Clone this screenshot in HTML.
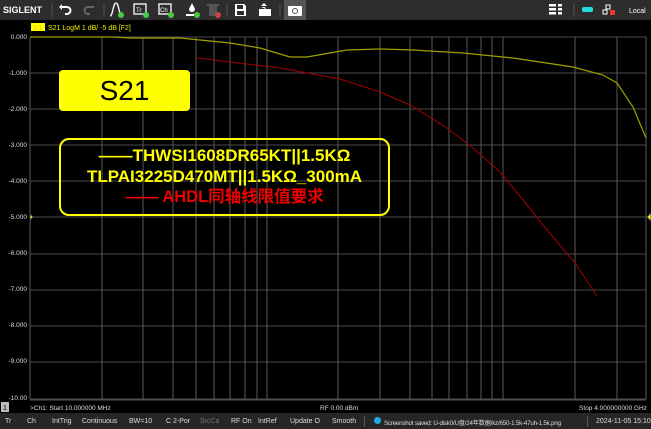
<!DOCTYPE html>
<html><head><meta charset="utf-8"><style>
body{margin:0;width:651px;height:429px;background:#000;overflow:hidden;font-family:"Liberation Sans","Noto Sans CJK SC",sans-serif;position:relative}
.tb{position:absolute;left:0;top:0;width:651px;height:20px;background:#2d2d2d}
.sb{position:absolute;left:0;top:413px;width:651px;height:16px;background:#262626;color:#ddd;font-size:7px}
.sb span{position:absolute;top:5px;white-space:nowrap}
.ab{position:absolute}
</style></head><body>
<div class="tb">
<svg width="651" height="20" style="position:absolute;left:0;top:0">
<text x="3" y="13" fill="#fff" font-size="9" font-weight="bold" font-family="Liberation Sans">SIGLENT</text>
<g stroke="#555" stroke-width="1"><line x1="52" y1="3" x2="52" y2="17"/><line x1="104" y1="3" x2="104" y2="17"/><line x1="227" y1="3" x2="227" y2="17"/><line x1="280" y1="3" x2="280" y2="17"/><line x1="574" y1="3" x2="574" y2="17"/></g>
<path d="M61 7 h6 a3 3 0 0 1 0 7 h-2" stroke="#fff" stroke-width="2" fill="none"/><path d="M59 7 l3-3 v6z" fill="#fff"/>
<path d="M94 7 h-6 a3 3 0 0 0 0 7 h2" stroke="#666" stroke-width="2" fill="none"/>
<path d="M110 16 C113 16 113 3 116 3 C119 3 119 16 122 16" stroke="#fff" fill="none" stroke-width="1.3"/><circle cx="121" cy="15" r="3" fill="#4c4"/>
<rect x="134" y="4" width="12" height="10" fill="none" stroke="#fff" stroke-width="1.3"/><text x="136" y="12" fill="#fff" font-size="6">Tr</text><circle cx="146" cy="15" r="3" fill="#4c4"/>
<rect x="159" y="4" width="12" height="10" fill="none" stroke="#fff" stroke-width="1.3"/><text x="160" y="12" fill="#fff" font-size="6">Ch</text><circle cx="171" cy="15" r="3" fill="#4c4"/>
<path d="M192 3 l3 6 a3 3 0 0 1 -6 0z" fill="#fff"/><rect x="186" y="14" width="8" height="2" fill="#fff"/><circle cx="197" cy="15" r="3" fill="#4c4"/>
<rect x="209" y="6" width="8" height="10" fill="#555"/><rect x="207" y="4" width="12" height="2" fill="#555"/><circle cx="218" cy="15" r="3" fill="#c44"/>
<path d="M235 4 h9 l2 2 v10 h-11z" fill="#fff"/><rect x="237" y="5" width="6" height="4" fill="#2d2d2d"/><rect x="237" y="11" width="7" height="4" fill="#2d2d2d"/>
<path d="M259 9 h12 v7 h-12z M261 7 h4 l1 2" fill="#fff"/><path d="M264 3 l3 3 h-6z" fill="#fff"/>
<rect x="284" y="0" width="22" height="20" fill="#555"/><rect x="288" y="6" width="14" height="10" rx="1" fill="#fff"/><circle cx="295" cy="11" r="3" fill="#555"/><circle cx="295" cy="11" r="2" fill="#fff"/>
<g fill="#fff"><rect x="549" y="4" width="7" height="2.5"/><rect x="558" y="4" width="4" height="2.5"/><rect x="549" y="8" width="7" height="2.5"/><rect x="558" y="8" width="4" height="2.5"/><rect x="549" y="12" width="7" height="2.5"/><rect x="558" y="12" width="4" height="2.5"/></g>
<rect x="582" y="7" width="11" height="5" rx="2" fill="#2dd"/>
<rect x="606" y="5" width="4" height="4" fill="none" stroke="#fff"/><rect x="603" y="10" width="4" height="4" fill="none" stroke="#fff"/><rect x="610" y="10" width="5" height="5" fill="#e33"/>
<text x="629" y="13" fill="#fff" font-size="7">Local</text>
</svg></div>

<svg class="ab" style="left:0;top:20px" width="651" height="393">
<rect x="31" y="3" width="14" height="8" fill="#ff0"/><text x="33" y="10" fill="#cc0" font-size="6">Tr1</text>
<text x="48" y="10" fill="#ee0" font-size="7">S21 LogM 1 dB/ -5 dB [F2]</text>
<g font-size="6.5" fill="#ddd" text-anchor="end">
<text x="27" y="19">0.000</text><text x="27" y="55">-1.000</text><text x="27" y="91">-2.000</text><text x="27" y="127">-3.000</text><text x="27" y="163">-4.000</text><text x="27" y="199">-5.000</text><text x="27" y="235">-6.000</text><text x="27" y="271">-7.000</text><text x="27" y="307">-8.000</text><text x="27" y="343">-9.000</text><text x="27" y="380">-10.00</text>
</g>
<g stroke="#4a4a4a" stroke-width="1" transform="translate(0,-20)">
<line x1="30" y1="37" x2="646" y2="37"/><line x1="30" y1="73" x2="646" y2="73"/><line x1="30" y1="109" x2="646" y2="109"/><line x1="30" y1="145" x2="646" y2="145"/><line x1="30" y1="181" x2="646" y2="181"/><line x1="30" y1="217" x2="646" y2="217"/><line x1="30" y1="254" x2="646" y2="254"/><line x1="30" y1="290" x2="646" y2="290"/><line x1="30" y1="326" x2="646" y2="326"/><line x1="30" y1="362" x2="646" y2="362"/><line x1="30" y1="399" x2="646" y2="399"/>
<g stroke="#5a5a5a">
<line x1="30" y1="37" x2="30" y2="399"/><line x1="102" y1="37" x2="102" y2="399"/><line x1="143" y1="37" x2="143" y2="399"/><line x1="173" y1="37" x2="173" y2="399"/><line x1="196" y1="37" x2="196" y2="399"/><line x1="214" y1="37" x2="214" y2="399"/><line x1="230" y1="37" x2="230" y2="399"/><line x1="245" y1="37" x2="245" y2="399"/><line x1="257" y1="37" x2="257" y2="399"/><line x1="267" y1="37" x2="267" y2="399"/><line x1="338" y1="37" x2="338" y2="399"/><line x1="380" y1="37" x2="380" y2="399"/><line x1="410" y1="37" x2="410" y2="399"/><line x1="432" y1="37" x2="432" y2="399"/><line x1="449" y1="37" x2="449" y2="399"/><line x1="467" y1="37" x2="467" y2="399"/><line x1="481" y1="37" x2="481" y2="399"/><line x1="492" y1="37" x2="492" y2="399"/><line x1="503" y1="37" x2="503" y2="399"/><line x1="575" y1="37" x2="575" y2="399"/><line x1="617" y1="37" x2="617" y2="399"/><line x1="646" y1="37" x2="646" y2="399"/>
</g>
<polyline fill="none" stroke="#a0a000" stroke-width="1.2" points="30,37 113,37 130,38 180,38 230,43 260,48 290,57 307,57 347,50 380,49 413,50 463,53 513,58 573,67 603,75 617,83 633,107 646,138"/>
<polyline fill="none" stroke="#a00000" stroke-width="1" points="197,58 280,68 340,79 380,92 410,105 447,128 473,148 500,172 523,200 543,225 575,263 597,296"/>
<path d="M30 214 l3 3 l-3 3z M651 213 l-4 4 l4 4z" fill="#ff0"/>
</g>
<line x1="30" y1="380" x2="646" y2="380" stroke="#555"/>
<rect x="1" y="382" width="8" height="10" fill="#bbb"/><text x="3" y="390" font-size="7" fill="#000">1</text>
<text x="30" y="390" font-size="6.5" fill="#ddd">&gt;Ch1: Start 10.000000 MHz</text>
<text x="320" y="390" font-size="6.5" fill="#ddd">RF 0.00 dBm</text>
<text x="647" y="390" font-size="6.5" fill="#ddd" text-anchor="end">Stop 4.000000000 GHz</text>
</svg>

<div class="ab" style="left:59px;top:70px;width:131px;height:41px;background:#ff0;border-radius:4px;color:#000;font-size:28px;text-align:center;line-height:41px">S21</div>
<div class="ab" style="left:59px;top:138px;width:331px;height:78px;box-sizing:border-box;border:2px solid #ff0;border-radius:10px;text-align:center;font-weight:bold;font-size:17px;line-height:20.5px;padding-top:6px;white-space:nowrap">
<div style="color:#ff0">——THWSI1608DR65KT||1.5KΩ</div>
<div style="color:#ff0">TLPAI3225D470MT||1.5KΩ_300mA</div>
<div style="color:#e00;font-size:16.5px">—— AHDL同轴线限值要求</div>
</div>

<div class="sb">
<span style="left:5px">Tr</span><span style="left:27px">Ch</span><span style="left:52px">IntTrig</span><span style="left:82px">Continuous</span><span style="left:129px">BW=10</span><span style="left:166px">C 2-Por</span><span style="left:200px;color:#777">SrcCa</span><span style="left:231px">RF On</span><span style="left:258px">IntRef</span><span style="left:290px">Update O</span><span style="left:332px">Smooth</span>
<span style="left:364px;top:3px;width:1px;height:11px;background:#555"></span>
<span style="left:374px;top:4px;width:7px;height:7px;border-radius:50%;background:#2ad"></span>
<span style="left:384px;font-size:6.2px;letter-spacing:-0.2px">Screenshot saved: U-disk0/U盘/24年数据/kz/650-1.5k-47uh-1.5k.png</span>
<span style="left:587px;top:3px;width:1px;height:11px;background:#555"></span>
<span style="left:596px">2024-11-05 15:10</span>
</div>
</body></html>
